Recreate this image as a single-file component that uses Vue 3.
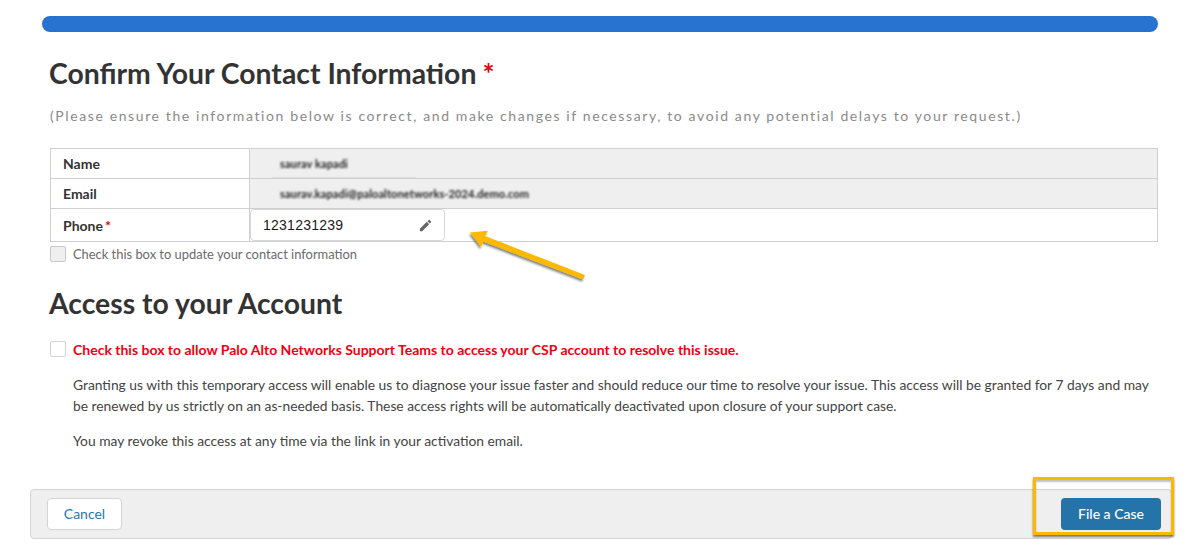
<script setup>
const rows = [
  { label: 'Name', value: 'saurav kapadi', cls: 'ruled' },
  { label: 'Email', value: 'saurav.kapadi@paloaltonetworks-2024.demo.com', cls: '' }
]
</script>

<template>
  <div class="page">
    <div class="bar"></div>
    <div class="content">
      <h1 class="title">Confirm Your Contact Information<span class="star">*</span></h1>
      <p class="hint">(Please ensure the information below is correct, and make changes if necessary, to avoid any potential delays to your request.)</p>
      <div class="table">
        <div v-for="r in rows" :key="r.label" class="row">
          <div class="label">{{ r.label }}</div>
          <div class="value" :class="r.cls"><span class="blur">{{ r.value }}</span></div>
        </div>
        <div class="row phone">
          <div class="label">Phone<span class="req">*</span></div>
          <div class="value open">
            <div class="input">
              <span>1231231239</span>
              <svg width="15" height="15" viewBox="0 0 24 24"><path fill="#666" d="M3 17.25V21h3.75L17.81 9.94l-3.75-3.75L3 17.25zM20.71 7.04a1 1 0 0 0 0-1.41l-2.34-2.34a1 1 0 0 0-1.41 0l-1.83 1.83 3.75 3.75 1.83-1.83z"/></svg>
            </div>
          </div>
        </div>
      </div>
      <label class="check muted"><span class="box grey"></span>Check this box to update your contact information</label>
      <h2 class="title second">Access to your Account</h2>
      <label class="check alert"><span class="box"></span>Check this box to allow Palo Alto Networks Support Teams to access your CSP account to resolve this issue.</label>
      <div class="copy">
        <p>Granting us with this temporary access will enable us to diagnose your issue faster and should reduce our time to resolve your issue. This access will be granted for 7 days and may be renewed by us strictly on an as-needed basis. These access rights will be automatically deactivated upon closure of your support case.</p>
        <p>You may revoke this access at any time via the link in your activation email.</p>
      </div>
    </div>
    <div class="footer">
      <button class="btn cancel">Cancel</button>
      <button class="btn primary">File a Case</button>
    </div>
    <svg class="arrow" width="130" height="65" viewBox="0 0 130 65">
      <defs><filter id="sh" x="-20%" y="-20%" width="140%" height="160%"><feDropShadow dx="-1" dy="2" stdDeviation="1.2" flood-color="#000" flood-opacity=".5"/></filter></defs>
      <path filter="url(#sh)" fill="#fdb900" d="M4 3.5 L22 1.7 L19 7 L119 46 L117 50.5 L17 12.5 L15 18 Z"/>
    </svg>
    <div class="highlight"></div>
  </div>
</template>

<style scoped>
.page { position: relative; width: 1185px; height: 546px; overflow: hidden; background: #fff; font-family: Lato, "Liberation Sans", sans-serif; color: #333; }
.bar { height: 16px; margin: 16px 27px 0 42px; background: #2872d0; border-radius: 8px; }
.content { margin: 0 27px 0 50px; }
.title { margin: 0 0 0 -1px; font-size: 28.35px; line-height: 36px; font-weight: 700; color: #333; }
.content > .title:first-child { margin-top: 23px; }
.star { color: #e8000b; margin-left: 6px; }
.hint { margin: 15px 0 0; font-size: 14px; line-height: 20px; letter-spacing: 1.61px; color: #8a8a8a; }
.table { margin-top: 22px; border: 1px solid #d0d0d0; border-bottom: 0; }
.row { display: flex; height: 30px; border-bottom: 1px solid #d0d0d0; box-sizing: border-box; }
.row.phone { height: 33px; }
.label { width: 199px; flex: none; box-sizing: border-box; padding-left: 12px; border-right: 1px solid #d0d0d0; font-size: 14px; font-weight: 700; line-height: 29px; color: #333; }
.phone .label { line-height: 33px; }
.req { color: #e8000b; margin-left: 2px; }
.value { position: relative; flex: 1; background: #efefef; padding-left: 30px; line-height: 29px; font-size: 11px; }
.ruled::after { content: ""; position: absolute; left: 22px; bottom: 0; width: 144px; height: 1px; background: #dcdcdc; }
.blur { filter: blur(1px); display: inline-block; color: #222; font-weight: 700; letter-spacing: .1px; }
.value.open { background: #fff; padding-left: 0; }
.input { width: 195px; height: 32px; box-sizing: border-box; border: 1px solid #d8d8d8; border-radius: 4px; display: flex; align-items: center; justify-content: space-between; padding: 0 11px 0 12px; font-size: 14px; color: #1a1a1a; font-family: "Liberation Sans", sans-serif; letter-spacing: .25px; }
.check { display: flex; align-items: center; }
.muted { margin-top: 3px; color: #6a6a6a; height: 18px; font-size: 12.9px; }
.box { width: 16px; height: 16px; box-sizing: border-box; border: 1px solid #d4d4d4; border-radius: 2px; margin-right: 7px; background: #fff; flex: none; }
.grey { background: #efefef; border-color: #c8c8c8; }
.second { margin-top: 22px; }
.alert { margin-top: 18px; color: #f00010; font-weight: 700; font-size: 14px; height: 20px; }
.copy { margin: 15px 0 0 23px; font-size: 13.82px; line-height: 21px; color: #444; }
.copy p { margin: 0 0 14px; }
.footer { position: absolute; left: 30px; top: 489px; width: 1142px; height: 50px; box-sizing: border-box; border: 1px solid #d4d4d4; border-radius: 4px; background: #efefef; display: flex; align-items: center; justify-content: space-between; padding: 0 10px 0 16px; }
.btn { height: 32px; border-radius: 4px; font: 14px Lato, "Liberation Sans", sans-serif; padding: 0 0 2px; cursor: pointer; }
.cancel { width: 75px; background: #fff; border: 1px solid #d4d4d4; color: #2a76ad; }
.primary { width: 100px; background: #2574a9; border: 0; color: #fff; font-weight: 500; }
.arrow { position: absolute; left: 466px; top: 229px; }
.highlight { position: absolute; left: 1033px; top: 477px; width: 141px; height: 58px; box-sizing: border-box; border: 3px solid #fdb900; box-shadow: 0 2px 2px rgba(0,0,0,.5), inset 0 2px 2px rgba(0,0,0,.25); }
</style>
